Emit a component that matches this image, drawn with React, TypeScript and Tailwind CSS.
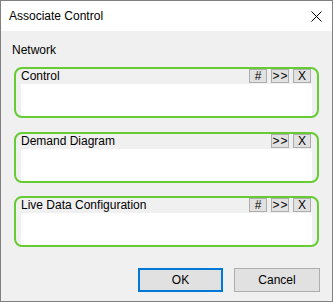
import React from 'react';

type Section = {
  title: string;
  hash: boolean;
  gap: string;
};

const sections: Section[] = [
  { title: 'Control', hash: true, gap: 'mt-[9px]' },
  { title: 'Demand Diagram', hash: false, gap: 'mt-[14px]' },
  { title: 'Live Data Configuration', hash: true, gap: 'mt-[13px]' },
];

function SmallButton({ label, spaced }: { label: string; spaced?: boolean }) {
  return (
    <button
      className={`flex h-[14px] w-[18px] items-center justify-center overflow-hidden whitespace-nowrap border border-[#adadad] bg-[#e1e1e1] text-[12px] leading-none text-black ${
        spaced ? 'tracking-[1px] pl-[1px]' : ''
      }`}
    >
      {label}
    </button>
  );
}

function Group({ section }: { section: Section }) {
  return (
    <div className={`${section.gap} flex h-[51px] flex-col rounded-[8px] border-2 border-[#66cc33]`}>
      <div className="flex h-[15px] items-start justify-between pl-[5px] pr-[6px]">
        <span className="text-[12px] leading-[15px] text-black">{section.title}</span>
        <div className="flex gap-[4px]">
          {section.hash && <SmallButton label="#" />}
          <SmallButton label=">>" spaced />
          <SmallButton label="X" />
        </div>
      </div>
      <div className="mx-[5px] flex-1 bg-white" />
    </div>
  );
}

export default function App() {
  return (
    <div
      className="flex h-[302px] w-[333px] flex-col border border-[#808080] bg-[#f0f0f0]"
      style={{ fontFamily: '"Liberation Sans", Arial, sans-serif' }}
    >
      <div className="flex h-[30px] items-center justify-between bg-white pl-[8px] pr-[9px]">
        <span className="text-[12px] text-black">Associate Control</span>
        <svg width="11" height="11" viewBox="0 0 11 11" className="mr-[1px]">
          <path d="M0.5 0.5 L10.5 10.5 M10.5 0.5 L0.5 10.5" stroke="#000" strokeWidth="1" />
        </svg>
      </div>

      <div className="flex flex-1 flex-col px-[13px] pt-[12px]">
        <div className="-ml-[2px] text-[12px] leading-[15px] text-black">Network</div>
        {sections.map((s) => (
          <Group key={s.title} section={s} />
        ))}

        <div className="mt-[21px] flex justify-end gap-[11px]">
          <button className="h-[24px] w-[85px] border-2 border-[#0078d7] bg-[#e1e1e1] text-[12px] text-black">
            OK
          </button>
          <button className="-mr-[1px] h-[24px] w-[86px] border border-[#adadad] bg-[#e1e1e1] text-[12px] text-black">
            Cancel
          </button>
        </div>
      </div>
    </div>
  );
}
